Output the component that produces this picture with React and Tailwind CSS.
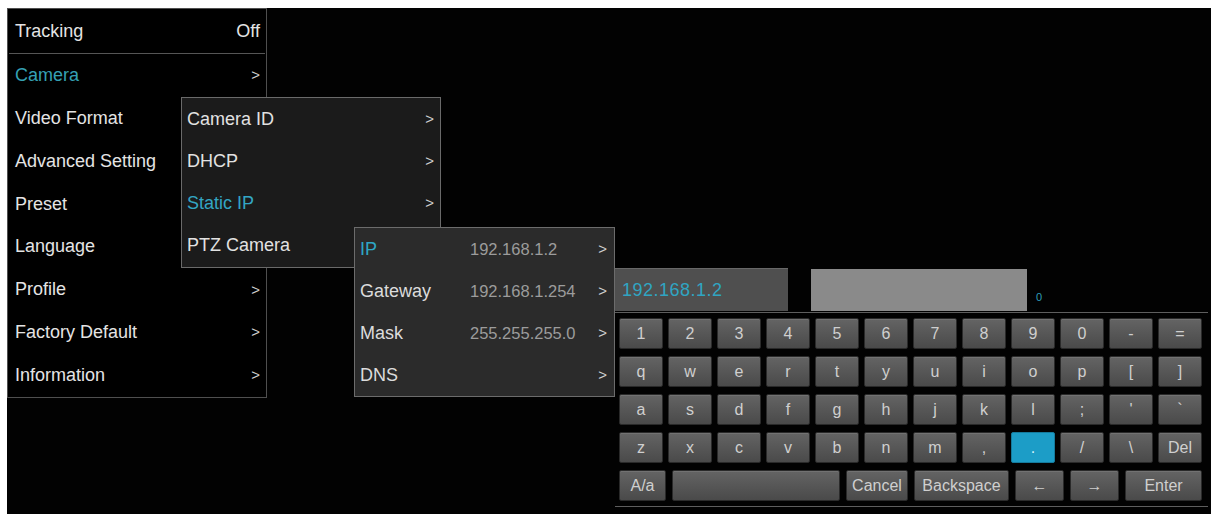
const mainItems = [
  { label: "Camera", active: true },
  { label: "Video Format", covered: true },
  { label: "Advanced Setting", covered: true },
  { label: "Preset", covered: true },
  { label: "Language", covered: true },
  { label: "Profile" },
  { label: "Factory Default" },
  { label: "Information" },
];

const cameraItems = [
  { label: "Camera ID" },
  { label: "DHCP" },
  { label: "Static IP", active: true },
  { label: "PTZ Camera", covered: true },
];

const staticIpItems = [
  { label: "IP", value: "192.168.1.2", active: true },
  { label: "Gateway", value: "192.168.1.254" },
  { label: "Mask", value: "255.255.255.0" },
  { label: "DNS", value: "" },
];

const keyRows = [
  ["1", "2", "3", "4", "5", "6", "7", "8", "9", "0", "-", "="],
  ["q", "w", "e", "r", "t", "y", "u", "i", "o", "p", "[", "]"],
  ["a", "s", "d", "f", "g", "h", "j", "k", "l", ";", "'", "`"],
  ["z", "x", "c", "v", "b", "n", "m", ",", ".", "/", "\\", "Del"],
];

const bottomKeys = [
  { label: "A/a", w: "w-[47px]" },
  { label: "", w: "w-[168px]" },
  { label: "Cancel", w: "w-[62px]" },
  { label: "Backspace", w: "w-[95px]" },
  { label: "←", w: "w-[49px]" },
  { label: "→", w: "w-[49px]" },
  { label: "Enter", w: "w-[77px]" },
];

function Key({ label, selected, className = "" }) {
  return (
    <div
      className={`h-[31px] flex items-center justify-center rounded-[2px] border text-[16px] ${
        selected
          ? "bg-[#1c9dc7] border-[#157a9c] text-[#d8f1fa]"
          : "bg-gradient-to-b from-[#646464] to-[#4a4a4a] border-[#2a2a2a] text-[#cfcfcf] shadow-[inset_0_1px_0_#727272]"
      } ${className}`}
    >
      {label}
    </div>
  );
}

// a row hidden behind the next submenu keeps its arrow off
function Chevron({ hidden }) {
  if (hidden) return null;
  return <span className="text-[#d0d0d0] text-[15px]">&gt;</span>;
}

export default function App() {
  return (
    <div
      className="w-[1215px] h-[514px] bg-white pt-[8px] pl-[7px] pr-[4px] overflow-hidden"
      style={{ fontFamily: '"Liberation Sans", Arial, sans-serif' }}
    >
      <div className="relative w-full h-full bg-[#020202]">
        {/* main menu */}
        <div className="absolute left-0 top-0 w-[260px] h-[390px] bg-black border border-[#4f4f4f] flex flex-col">
          <div className="h-[45px] mx-[1px] flex items-center justify-between pl-[6px] pr-[5px] border-b border-[#555] text-[18px] text-[#e4e4e4]">
            <span>Tracking</span>
            <span>Off</span>
          </div>
          {mainItems.map((item) => (
            <div
              key={item.label}
              className="flex-1 flex items-center justify-between pl-[7px] pr-[6px] text-[18px]"
            >
              <span className={item.active ? "text-[#35a0b4]" : "text-[#e4e4e4]"}>
                {item.label}
              </span>
              <Chevron hidden={item.covered} />
            </div>
          ))}
        </div>

        {/* camera submenu */}
        <div className="absolute left-[174px] top-[89px] w-[260px] h-[171px] bg-[#1b1b1b] border border-[#6a6a6a] flex flex-col">
          {cameraItems.map((item) => (
            <div
              key={item.label}
              className="flex-1 flex items-center justify-between pl-[5px] pr-[6px] text-[18px]"
            >
              <span className={item.active ? "text-[#33a6c4]" : "text-[#e2e2e2]"}>
                {item.label}
              </span>
              <Chevron hidden={item.covered} />
            </div>
          ))}
        </div>

        {/* static ip submenu */}
        <div className="absolute left-[347px] top-[219px] w-[261px] h-[170px] bg-[#2b2b2b] border border-[#6c6c6c] flex flex-col">
          {staticIpItems.map((item) => (
            <div
              key={item.label}
              className="flex-1 flex items-center pl-[5px] pr-[7px] text-[18px]"
            >
              <span
                className={`w-[110px] ${item.active ? "text-[#2ea7c6]" : "text-[#dcdcdc]"}`}
              >
                {item.label}
              </span>
              <span className="flex-1 text-[16.5px] text-[#9c9c9c]">{item.value}</span>
              <Chevron />
            </div>
          ))}
        </div>

        {/* on-screen keyboard */}
        <div className="absolute left-[608px] top-[260px] w-[593px] flex flex-col">
          <div className="flex items-end border-b border-[#5e5e5e] pb-[1px]">
            <div className="w-[173px] h-[43px] bg-[#4f4f4f] border-t border-[#686868] flex items-center pl-[7px] text-[18px] tracking-[0.5px] text-[#2fa5c2]">
              192.168.1.2
            </div>
            <div className="ml-[23px] w-[216px] h-[42px] bg-[#8a8a8a]" />
            <span className="ml-[9px] mb-[6px] text-[11px] text-[#2e9fb6]">0</span>
          </div>
          <div className="flex flex-col gap-[7px] pt-[5px] pl-[4px] pb-[5px] border-b border-[#5e5e5e]">
            {keyRows.map((row, r) => (
              <div key={r} className="flex gap-[5px]">
                {row.map((k) => (
                  <Key
                    key={k}
                    label={k}
                    selected={k === "."}
                    className="w-[44px]"
                  />
                ))}
              </div>
            ))}
            <div className="flex gap-[6px]">
              {bottomKeys.map((k, i) => (
                <Key key={i} label={k.label} className={k.w} />
              ))}
            </div>
          </div>
        </div>
      </div>
    </div>
  );
}
